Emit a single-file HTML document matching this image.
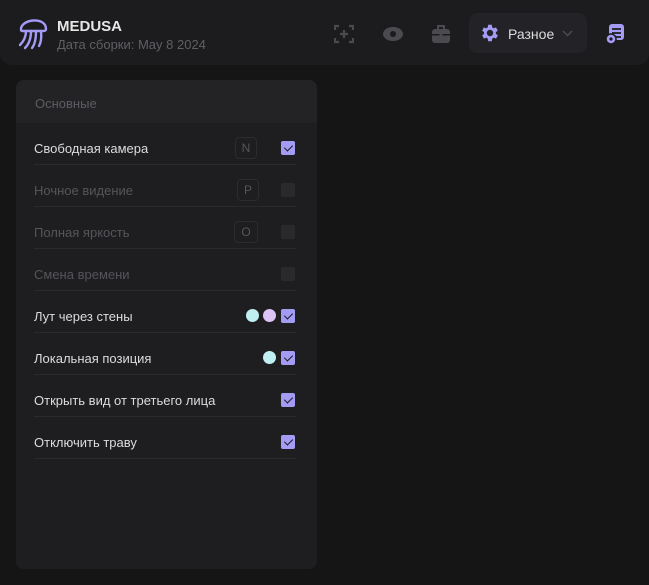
<!DOCTYPE html><html><head><meta charset="utf-8"><style>
*{margin:0;padding:0;box-sizing:border-box}
body{width:649px;height:585px;background:#151516;font-family:"Liberation Sans",sans-serif;position:relative;overflow:hidden}
.hdr{position:absolute;left:0;top:0;width:649px;height:65px;background:#1c1c1e;border-radius:0 0 12px 12px}
.t1{position:absolute;left:57px;top:18px;color:#e6e6e6;font-weight:bold;font-size:15px}
.t2{position:absolute;left:57px;top:37px;color:#5f5f64;font-size:13px}
.panel{position:absolute;left:16px;top:80px;width:301px;height:489px;background:#1e1e20;border-radius:8px;overflow:hidden}
.ph{height:43px;background:#232326;color:#5c5c62;font-size:13px;padding:16px 0 0 19px}
.row{position:absolute;left:18px;width:262px;height:42px;border-bottom:1px solid #2a2a2d;font-size:13px;color:#dcdcdc}
.row span{position:absolute;left:0;top:18px}
.row.d{color:#55555a}
.cb{position:absolute;left:247px;top:18px;width:14px;height:14px;border-radius:2px;background:#2a2a2d}
.cb.on{background:#a49bf5}
.cb.on:after{content:"";position:absolute;left:4.5px;top:2px;width:4px;height:7px;border:solid #1c1c1e;border-width:0 1.5px 1.5px 0;transform:rotate(45deg)}
.k{position:absolute;top:14px;height:22px;border:1px solid #2c2c2f;border-radius:4px;color:#55555a;font-size:12px;text-align:center;line-height:20px;width:22px}
.dot{position:absolute;top:18px;width:13px;height:13px;border-radius:50%}
.btn{position:absolute;left:469px;top:13px;width:118px;height:40px;background:#232327;border-radius:8px}
</style></head><body>
<div class="hdr">
<svg style="position:absolute;left:16px;top:15px" width="34" height="36" viewBox="0 0 34 36" fill="none" stroke="#a49bf5" stroke-width="2.4" stroke-linecap="round" stroke-linejoin="round"><path d="M5 15 C4 4 30 1 30 14 Q30 16 27 16 L7 16 Q5 16 5 15Z"/><path d="M10 16 Q10 24 4 30"/><path d="M15 16 Q15 27 9 33"/><path d="M20 16 Q20 28 16 33"/><path d="M25 16 Q26 26 23 31"/></svg>
<div class="t1">MEDUSA</div><div class="t2">Дата сборки: May 8 2024</div>
<svg style="position:absolute;left:334px;top:24px" width="20" height="20" viewBox="0 0 20 20" fill="none" stroke="#4a4a4f" stroke-width="2.2"><path d="M1 6V2h4M15 2h4v4M19 14v4h-4M5 18H1v-4M10 6v8M6 10h8"/></svg>
<svg style="position:absolute;left:383px;top:27px" width="20" height="14" viewBox="0 0 20 14"><ellipse cx="10" cy="7" rx="10" ry="7" fill="#4a4a4f"/><circle cx="10" cy="7" r="3" fill="#1c1c1e"/></svg>
<svg style="position:absolute;left:432px;top:24px" width="18" height="19" viewBox="0 0 18 19"><path d="M6 5V2h6v3" stroke="#4a4a4f" stroke-width="2" fill="none"/><rect x="0" y="5" width="18" height="14" rx="3" fill="#4a4a4f"/><rect x="0" y="10" width="18" height="1.5" fill="#1c1c1e"/><rect x="7.5" y="9" width="3" height="4" fill="#4a4a4f"/></svg>
<div class="btn">
<svg style="position:absolute;left:10px;top:9px" width="22" height="22" viewBox="0 0 24 24"><path fill="#a49bf5" d="M19.4 13a7.5 7.5 0 000-2l2.1-1.6-2-3.5-2.5 1a7 7 0 00-1.7-1L15 3h-4l-.4 2.9a7 7 0 00-1.7 1l-2.5-1-2 3.5L6.5 11a7.5 7.5 0 000 2l-2.1 1.6 2 3.5 2.5-1a7 7 0 001.7 1L11 21h4l.4-2.9a7 7 0 001.7-1l2.5 1 2-3.5zM13 15.5a3.5 3.5 0 110-7 3.5 3.5 0 010 7z" transform="translate(-1 0)"/></svg>
<span style="position:absolute;left:39px;top:13px;color:#dcdcdc;font-size:14px">Разное</span>
<svg style="position:absolute;left:93px;top:17px" width="11" height="7" viewBox="0 0 11 7" fill="none" stroke="#4a4a4f" stroke-width="1.5"><path d="M1 1l4.5 4.5L10 1"/></svg>
</div>
<svg style="position:absolute;left:605px;top:23px" width="22" height="22" viewBox="0 0 22 22"><rect x="4" y="1" width="15" height="16" rx="3" fill="#a49bf5"/><path d="M7 6h9M7 10h9M11 14h5" stroke="#1c1c1e" stroke-width="1.8"/><circle cx="6" cy="16" r="5" fill="#a49bf5" stroke="#1c1c1e" stroke-width="1.5"/><circle cx="6" cy="16" r="1.6" fill="#1c1c1e"/></svg>
</div>
<div class="panel"><div class="ph">Основные</div>
<div class="row" style="top:43px"><span>Свободная камера</span><div class="k" style="left:201px">N</div><div class="cb on"></div></div>
<div class="row d" style="top:85px"><span>Ночное видение</span><div class="k" style="left:203px">P</div><div class="cb"></div></div>
<div class="row d" style="top:127px"><span>Полная яркость</span><div class="k" style="left:200px;width:24px">O</div><div class="cb"></div></div>
<div class="row d" style="top:169px"><span>Смена времени</span><div class="cb"></div></div>
<div class="row" style="top:211px"><span>Лут через стены</span><div class="dot" style="left:212px;background:#bfeff0"></div><div class="dot" style="left:229px;background:#dcc3f3"></div><div class="cb on"></div></div>
<div class="row" style="top:253px"><span>Локальная позиция</span><div class="dot" style="left:229px;background:#bfeff0"></div><div class="cb on"></div></div>
<div class="row" style="top:295px"><span>Открыть вид от третьего лица</span><div class="cb on"></div></div>
<div class="row" style="top:337px"><span>Отключить траву</span><div class="cb on"></div></div>
</div>
</body></html>
